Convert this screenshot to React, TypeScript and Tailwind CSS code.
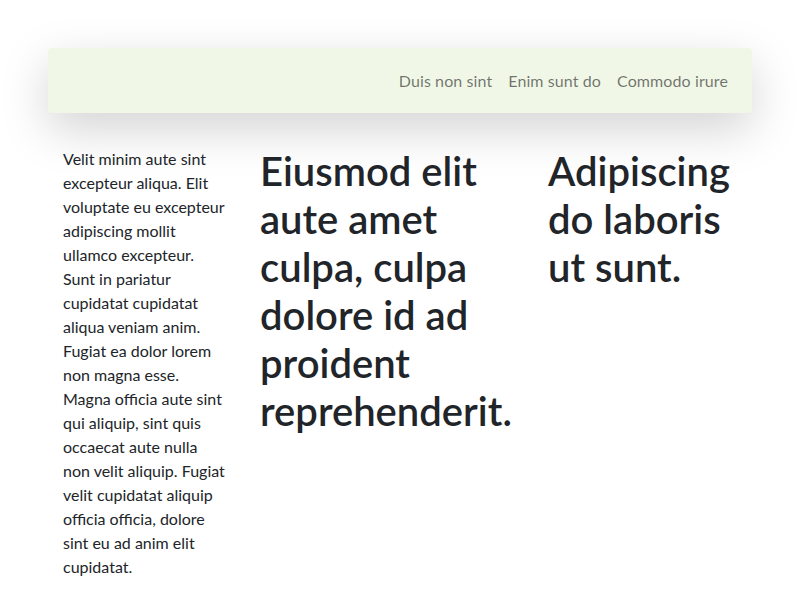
import React from 'react';

const links = ['Duis non sint', 'Enim sunt do', 'Commodo irure'];

// Barre de navigation
const Navbar: React.FC = () => {
  return (
    <nav className="flex h-[65px] items-center justify-end rounded bg-[#f0f7e7] px-4 shadow-[0_16px_48px_rgba(0,0,0,0.175)]">
      <ul className="flex items-center">
        {links.map((l) => (
          <li key={l}>
            <a href="#" className="block px-2 py-2 text-base leading-6 tracking-[0.1px] text-black/55">
              {l}
            </a>
          </li>
        ))}
      </ul>
    </nav>
  );
};

export default function App() {
  return (
    <div className="min-h-[600px] bg-white px-12 pt-12 text-[#212529] font-['Segoe_UI','Lato',sans-serif]">
      <Navbar />
      <div className="mt-[34px] grid grid-cols-[197px_288px_219px]">
        <div className="px-[15px]">
          <p className="w-[163px] text-base leading-6">
            Velit minim aute sint excepteur aliqua. Elit voluptate eu excepteur adipiscing mollit
            ullamco excepteur. Sunt in pariatur cupidatat cupidatat aliqua veniam anim. Fugiat ea
            dolor lorem non magna esse. Magna officia aute sint qui aliquip, sint quis occaecat aute
            nulla non velit aliquip. Fugiat velit cupidatat aliquip officia officia, dolore sint eu
            ad anim elit cupidatat.
          </p>
        </div>
        <div className="px-[15px]">
          <h1 className="text-[40px] font-semibold leading-[48px]">
            Eiusmod elit aute amet culpa, culpa dolore id ad proident reprehenderit.
          </h1>
        </div>
        <div className="px-[15px]">
          <h1 className="text-[40px] font-semibold leading-[48px]">
            Adipiscing do laboris ut sunt.
          </h1>
        </div>
      </div>
    </div>
  );
}
